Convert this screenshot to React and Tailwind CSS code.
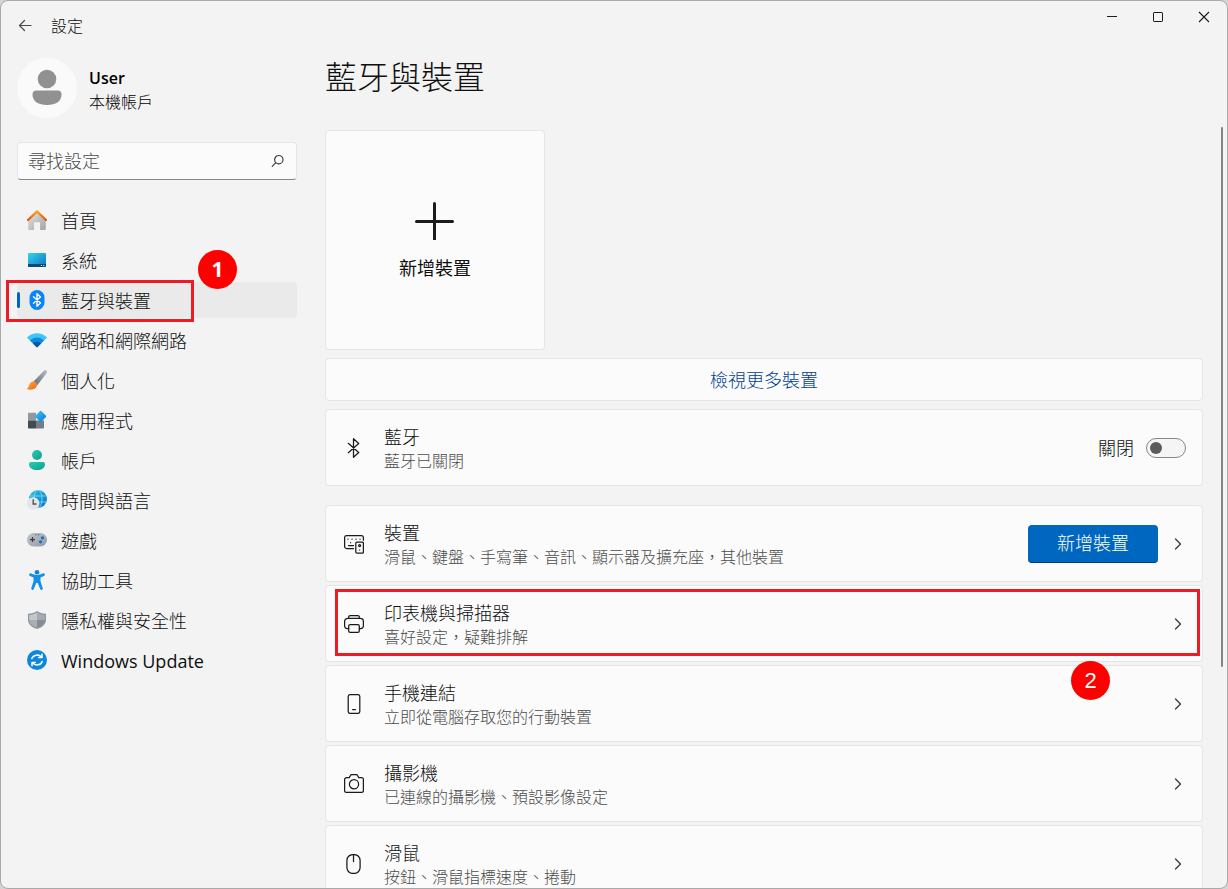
import { useState } from "react";

function HomeIcon() {
  return (
    <svg viewBox="0 0 20 20" className="size-5" aria-hidden="true">
      <defs>
        <linearGradient id="home-wall" x1="0" y1="0" x2="1" y2="1">
          <stop offset="0" stopColor="#e3e3e3" />
          <stop offset="1" stopColor="#a3a3a5" />
        </linearGradient>
        <linearGradient id="home-roof" x1="0" y1="0" x2="0" y2="1">
          <stop offset="0" stopColor="#f8a51b" />
          <stop offset="1" stopColor="#dc5512" />
        </linearGradient>
      </defs>
      <path d="M10 2.200 1.200 10.500V19a1 1 0 0 0 1 1H7v-7a.8.8 0 0 1 .8-.8h4.400a.8.8 0 0 1 .8.8v7h4.800a1 1 0 0 0 1-1v-8.500z" fill="url(#home-wall)" />
      <path d="M1 10 10 1.400l9 8.600" fill="none" stroke="url(#home-roof)" strokeWidth="2.300" strokeLinecap="round" strokeLinejoin="round" />
    </svg>
  );
}

function SystemIcon() {
  return (
    <svg viewBox="0 0 20 20" className="size-5" aria-hidden="true">
      <defs>
        <linearGradient id="system-screen" x1="0" y1="0" x2="1" y2="1">
          <stop offset="0" stopColor="#37d6ea" />
          <stop offset="1" stopColor="#0c70c4" />
        </linearGradient>
      </defs>
      <rect x="1" y="3" width="18" height="14" rx="1" fill="url(#system-screen)" />
      <path d="M1 14h18v2a1 1 0 0 1-1 1H2a1 1 0 0 1-1-1z" fill="#0b4a77" />
      <path d="M14 15.500h1M16.300 15.500h1" stroke="#fff" strokeWidth="1" />
    </svg>
  );
}

function BluetoothBadgeIcon() {
  return (
    <svg viewBox="0 0 20 20" className="size-5" aria-hidden="true">
      <rect x="2.500" y="0" width="15" height="20" rx="7.500" fill="#0a84f8" />
      <path d="m6.500 6.800 7 6.200-3.500 3.200V3.800L13.500 7l-7 6.200" fill="none" stroke="#fff" strokeWidth="1.400" strokeLinejoin="round" strokeLinecap="round" />
    </svg>
  );
}

function WifiIcon() {
  return (
    <svg viewBox="0 0 20 20" className="size-5" aria-hidden="true">
      <path d="M.3 7.200C5.600 1.900 14.400 1.900 19.700 7.200a.6.6 0 0 1 0 .8l-9.200 8.900a.7.7 0 0 1-1 0L.3 8a.6.6 0 0 1 0-.8z" fill="#3cc8f5" />
      <path d="M3 10.500c3.900-3.900 10.100-3.900 14 0l-6.500 6.400a.7.7 0 0 1-1 0z" fill="#1089e0" />
      <path d="M6 13.500c2.200-2.200 5.800-2.200 8 0l-3.500 3.400a.7.7 0 0 1-1 0z" fill="#0a53a4" />
    </svg>
  );
}

function BrushIcon() {
  return (
    <svg viewBox="0 0 20 20" className="size-5" aria-hidden="true">
      <defs>
        <linearGradient id="brush-handle" x1="1" y1="0" x2="0" y2="1">
          <stop offset="0" stopColor="#b4bac0" />
          <stop offset="1" stopColor="#656c75" />
        </linearGradient>
        <linearGradient id="brush-tip" x1="0" y1="0" x2="1" y2="1">
          <stop offset="0" stopColor="#ffae33" />
          <stop offset="1" stopColor="#f0641a" />
        </linearGradient>
      </defs>
      <path d="M19.400.6c.8.8.7 1.800.1 2.700l-9.200 12L6.500 11.600 16.900.8c.8-.7 1.800-.8 2.500-.2z" fill="url(#brush-handle)" />
      <path d="M3.100 13.200c1.500-2 4.300-2.200 5.800-.6 1.500 1.500 1.400 4-.4 5.500-2.100 1.700-5.800 2-8.200 1.100-.4-.2-.4-.7 0-.9 1.700-.9 1.600-3.500 2.800-5.100z" fill="url(#brush-tip)" />
    </svg>
  );
}

function AppsIcon() {
  return (
    <svg viewBox="0 0 20 20" className="size-5" aria-hidden="true">
      <defs>
        <linearGradient id="apps-diamond" x1="0" y1="0" x2="1" y2="1">
          <stop offset="0" stopColor="#3acbf8" />
          <stop offset="1" stopColor="#0b74d4" />
        </linearGradient>
      </defs>
      <path d="M1 3.500a.8.8 0 0 1 .8-.8H9V10.500H1z" fill="#9299a3" />
      <path d="M1 10.500h8V18.500H1.800a.8.8 0 0 1-.8-.8z" fill="#434a52" />
      <path d="M9 10.500h8v7.200a.8.8 0 0 1-.8.8H9z" fill="#757d88" />
      <path d="M13.100.9a.8.8 0 0 1 1.100 0l4.800 4.900a.8.8 0 0 1 0 1.100L14.200 11.800a.8.8 0 0 1-1.100 0L8.300 6.900a.8.8 0 0 1 0-1.100z" fill="url(#apps-diamond)" />
    </svg>
  );
}

function AccountIcon() {
  return (
    <svg viewBox="0 0 20 20" className="size-5" aria-hidden="true">
      <defs>
        <linearGradient id="account-body" x1="0" y1="0" x2="1" y2="1">
          <stop offset="0" stopColor="#27cdb4" />
          <stop offset="1" stopColor="#119c8c" />
        </linearGradient>
      </defs>
      <circle cx="10" cy="5" r="5" fill="url(#account-body)" />
      <path d="M4 12h12a2 2 0 0 1 2 2c0 4-3.500 6-8 6s-8-2-8-6a2 2 0 0 1 2-2z" fill="url(#account-body)" />
    </svg>
  );
}

function TimeIcon() {
  return (
    <svg viewBox="0 0 20 20" className="size-5" aria-hidden="true">
      <defs>
        <linearGradient id="time-globe" x1="0" y1="0" x2="1" y2="1">
          <stop offset="0" stopColor="#2cc4e0" />
          <stop offset="1" stopColor="#0a6ec8" />
        </linearGradient>
      </defs>
      <circle cx="11" cy="9" r="9" fill="url(#time-globe)" />
      <g fill="none" stroke="#7fe2f2" strokeWidth=".8">
        <ellipse cx="11" cy="9" rx="4" ry="9" />
        <path d="M3 6h16M3 12h16" />
      </g>
      <circle cx="6.200" cy="13.500" r="6.200" fill="#e3e5e8" />
      <path d="M6.200 9.300v4.700h3.300" fill="none" stroke="#4d545c" strokeWidth="1.400" />
    </svg>
  );
}

function GamingIcon() {
  return (
    <svg viewBox="0 0 20 20" className="size-5" aria-hidden="true">
      <defs>
        <linearGradient id="pad-body" x1="0" y1="0" x2="1" y2="1">
          <stop offset="0" stopColor="#c0c6cc" />
          <stop offset="1" stopColor="#929aa3" />
        </linearGradient>
      </defs>
      <rect x="0" y="3" width="20" height="13.500" rx="6.500" fill="url(#pad-body)" />
      <path d="M3 9.600h5M5.500 7.100v5" stroke="#393f46" strokeWidth="1.300" />
      <path d="M8.300 4.800h1.200M11 4.800h1.200" stroke="#4d545c" strokeWidth="1" />
      <circle cx="15.500" cy="7.800" r="1.600" fill="#0f6fc9" />
      <circle cx="13.500" cy="11.800" r="1.600" fill="#0f6fc9" />
    </svg>
  );
}

function AccessibilityIcon() {
  return (
    <svg viewBox="0 0 20 20" className="size-5" aria-hidden="true">
      <circle cx="10" cy="2.300" r="2.300" fill="#0e84dd" />
      <path d="M2.300 4.100c.4-.8 1.100-.9 1.900-.5 3.600 1.900 8 1.900 11.600 0 .8-.4 1.500-.3 1.900.5.300.8 0 1.400-.7 1.800L13.500 7.500v3.800l2.200 6.800c.2.800-.1 1.500-.8 1.800-.8.200-1.400-.1-1.700-.8L10.700 13h-1.400l-2.500 6.100c-.3.700-.9 1-1.700.8-.7-.3-1-1-.8-1.800l2.200-6.800V7.500L3 5.900c-.7-.4-1-1-.7-1.800z" fill="#1391e6" />
    </svg>
  );
}

function ShieldIcon() {
  return (
    <svg viewBox="0 0 20 20" className="size-5" aria-hidden="true">
      <path d="M10 1c2.600 1.900 5.500 2.700 9 2.800v5.700c0 4.500-3.300 7.700-9 9.500-5.700-1.800-9-5-9-9.500V3.800C4.500 3.700 7.400 2.900 10 1z" fill="#8f969d" />
      <path d="M10 2.600c2.300 1.500 4.800 2.200 7.700 2.400V10H10z" fill="#a4abb2" />
      <path d="M10 2.600C7.700 4.100 5.200 4.800 2.300 5v5H10z" fill="#c3c8cd" />
      <path d="M2.300 10c.3 3.600 2.900 6.100 7.700 7.600V10z" fill="#a9afb6" />
      <path d="M17.700 10c-.3 3.600-2.900 6.100-7.700 7.600V10z" fill="#858c94" />
    </svg>
  );
}

function UpdateIcon() {
  return (
    <svg viewBox="0 0 20 20" className="size-5" aria-hidden="true">
      <circle cx="10" cy="10" r="10" fill="#0d86dc" />
      <g fill="none" stroke="#fff" strokeWidth="1.500" strokeLinecap="round" strokeLinejoin="round">
        <path d="M4.800 8.600C6.200 4.800 11.500 3.700 14.600 7.200" />
        <path d="M15 4.300v3.200h-3.300" />
        <path d="M15.200 11.400c-1.400 3.800-6.700 4.900-9.800 1.400" />
        <path d="M5 15.700v-3.200h3.300" />
      </g>
    </svg>
  );
}

function LineIcon({ children }) {
  return (
    <svg viewBox="0 0 20 20" className="size-5 shrink-0" fill="none" stroke="#1b1b1b" strokeWidth="1.250" strokeLinecap="round" strokeLinejoin="round" aria-hidden="true">
      {children}
    </svg>
  );
}

const bluetoothIcon = (
  <LineIcon>
    <path d="m4.300 5.300 10.400 9.200L9.500 19.300V.7l5.200 4.800-10.400 9.200" />
  </LineIcon>
);

const devicesIcon = (
  <LineIcon>
    <path d="M9.500 14.500H2.700A2.100 2.100 0 0 1 .6 12.400V3.700a2.100 2.100 0 0 1 2.100-2.100h14.600a2.100 2.100 0 0 1 2.100 2.100v2.500" />
    <path d="M4 5.200h.1M8 5.200h.1M12 5.200h.1M16 5.200h.1M6.500 8.700h.1M4.500 11.500h5" />
    <rect x="11.800" y="8" width="7.600" height="11.200" rx="1.200" />
    <circle cx="15.600" cy="11.500" r="1" />
    <path d="M15.600 16h.1" />
  </LineIcon>
);

const printerIcon = (
  <LineIcon>
    <path d="M4.700 14.500H3.200A2.600 2.600 0 0 1 .6 11.900V7.500a3.200 3.200 0 0 1 3.200-3.200h12.400a3.200 3.200 0 0 1 3.200 3.200v4.400a2.600 2.600 0 0 1-2.600 2.600h-1.500" />
    <path d="M4.700 4.300V3a1.400 1.400 0 0 1 1.400-1.400h7.800A1.400 1.400 0 0 1 15.300 3v1.300" />
    <rect x="4.700" y="10.500" width="10.600" height="7.900" rx="1.400" />
  </LineIcon>
);

const phoneIcon = (
  <LineIcon>
    <rect x="4.200" y=".6" width="11.600" height="18.800" rx="2" />
    <path d="M8.600 15.500h2.800" />
  </LineIcon>
);

const cameraIcon = (
  <LineIcon>
    <path d="M.6 5.600a2 2 0 0 1 2-2h2.700l1.100-2.100a1.400 1.400 0 0 1 1.200-.8h4.800a1.400 1.400 0 0 1 1.200.8l1.100 2.100h2.700a2 2 0 0 1 2 2v11.200a1.600 1.600 0 0 1-1.600 1.600H2.200A1.600 1.600 0 0 1 .6 16.800z" />
    <circle cx="10" cy="10.200" r="4.600" />
  </LineIcon>
);

const mouseIcon = (
  <LineIcon>
    <rect x="2.900" y=".6" width="13.200" height="18.800" rx="5.800" />
    <path d="M9.500.8v6.700" />
  </LineIcon>
);

function Chevron() {
  return (
    <svg viewBox="0 0 16 16" className="size-4 shrink-0" fill="none" stroke="#3a3a3a" strokeWidth="1.300" strokeLinecap="round" strokeLinejoin="round" aria-hidden="true">
      <path d="m5.500 3 5 5-5 5" />
    </svg>
  );
}

function StepBadge({ children, className }) {
  return (
    <span className={`absolute flex size-[39px] items-center justify-center rounded-full bg-[#ff0000] text-white ${className}`}>
      {children}
    </span>
  );
}

const navItems = [
  { label: "首頁", Icon: HomeIcon },
  { label: "系統", Icon: SystemIcon },
  { label: "藍牙與裝置", Icon: BluetoothBadgeIcon, current: true },
  { label: "網路和網際網路", Icon: WifiIcon },
  { label: "個人化", Icon: BrushIcon },
  { label: "應用程式", Icon: AppsIcon },
  { label: "帳戶", Icon: AccountIcon },
  { label: "時間與語言", Icon: TimeIcon },
  { label: "遊戲", Icon: GamingIcon },
  { label: "協助工具", Icon: AccessibilityIcon },
  { label: "隱私權與安全性", Icon: ShieldIcon },
  { label: "Windows Update", Icon: UpdateIcon, latin: true },
];

function NavItem({ label, Icon, current, latin }) {
  return (
    <li className="relative">
      <a
        href="#"
        aria-current={current ? "page" : undefined}
        className={`flex h-9 items-center gap-[14px] rounded pl-[10px] text-lg leading-6 ${current ? "bg-[#eaeaea]" : ""}`}
      >
        <Icon />
        <span className={`pt-[2px] ${latin ? "font-normal" : ""}`}>{label}</span>
      </a>
      {current && (
        <>
          <span className="absolute top-[10px] left-0 h-4 w-[3px] rounded-full bg-[#0067c0]" />
          <span className="absolute -top-[2px] -left-[11px] h-[42px] w-[188px] border-3 border-[#ed1c24]" />
          <StepBadge className="-top-8 left-[181px] font-['Open_Sans',sans-serif] text-[21px] font-bold">1</StepBadge>
        </>
      )}
    </li>
  );
}

function RowText({ title, detail }) {
  return (
    <span className="min-w-0 flex-1 pt-[2px]">
      <span className="block text-lg leading-6">{title}</span>
      <span className="block text-base leading-6 text-[#4c4c4c]">{detail}</span>
    </span>
  );
}

const cardClass = "flex h-[77px] shrink-0 items-center rounded border border-[#e5e5e5] bg-[#fbfbfb] pr-4 pl-[18px]";

function LinkRow({ icon, title, detail }) {
  return (
    <a href="#" className={`${cardClass} gap-5`}>
      {icon}
      <RowText title={title} detail={detail} />
      <Chevron />
    </a>
  );
}

export default function App() {
  const [bluetooth, setBluetooth] = useState(false);

  return (
    <div className="h-screen bg-[#d4d4d4] font-['Open_Sans','Noto_Sans_CJK_TC',sans-serif] font-light text-[#0f0f0f]" lang="zh-Hant">
      <div className="flex h-full flex-col overflow-hidden rounded-lg border border-[#a9a9a9] bg-[#f3f3f3]">
        <header className="flex h-[50px] shrink-0 items-center pl-4">
          <button type="button" aria-label="返回" className="flex size-4 items-center justify-center">
            <svg viewBox="0 0 16 16" className="size-4" fill="none" stroke="#4a4a4a" strokeWidth="1.200" strokeLinecap="round" strokeLinejoin="round">
              <path d="M14 7.500H2.500M7.500 2.500l-5 5 5 5" />
            </svg>
          </button>
          <span className="ml-[18px] flex-1 text-base leading-6">設定</span>
          <div className="flex self-start">
            <button type="button" aria-label="最小化" className="flex h-8 w-[46px] items-center justify-center">
              <svg viewBox="0 0 12 12" className="size-3" stroke="#1b1b1b">
                <path d="M1 5.500h10" />
              </svg>
            </button>
            <button type="button" aria-label="最大化" className="flex h-8 w-[46px] items-center justify-center">
              <svg viewBox="0 0 12 12" className="size-3" fill="none" stroke="#1b1b1b">
                <rect x="1.500" y="1.500" width="9" height="9" rx=".6" />
              </svg>
            </button>
            <button type="button" aria-label="關閉視窗" className="flex h-8 w-[46px] items-center justify-center">
              <svg viewBox="0 0 12 12" className="size-3" stroke="#1b1b1b" strokeWidth="1.100">
                <path d="m1 1 10 10M11 1 1 11" />
              </svg>
            </button>
          </div>
        </header>

        <div className="flex min-h-0 flex-1">
          <aside className="w-[296px] shrink-0 pt-[7px] pl-4">
            <div className="flex items-center gap-3">
              <svg viewBox="0 0 60 60" className="size-[60px]" aria-hidden="true">
                <circle cx="30" cy="30" r="30" fill="#fafafa" />
                <circle cx="30" cy="21" r="9.300" fill="#919191" />
                <path d="M19.500 32.500h21a4 4 0 0 1 4 4c0 7-6 10.500-14.500 10.500s-14.500-3.500-14.500-10.500a4 4 0 0 1 4-4z" fill="#919191" />
              </svg>
              <div className="pt-1 text-black">
                <div className="text-base leading-6 font-semibold">User</div>
                <div className="text-base leading-6">本機帳戶</div>
              </div>
            </div>

            <div className="mt-6 flex h-[38px] items-center rounded border border-[#e5e5e5] border-b-[#868686] bg-[#fbfbfb] px-[10px]">
              <label htmlFor="settings-search" className="sr-only">尋找設定</label>
              <input
                id="settings-search"
                type="text"
                placeholder="尋找設定"
                className="h-full min-w-0 flex-1 bg-transparent text-lg outline-none placeholder:text-[#4c4c4c]"
              />
              <svg viewBox="0 0 16 16" className="size-4" fill="none" stroke="#3f3f3f" strokeWidth="1.200" strokeLinecap="round" aria-hidden="true">
                <circle cx="8.800" cy="6.700" r="4.200" />
                <path d="M5.800 9.700 2.200 13.300" />
              </svg>
            </div>

            <nav className="mt-[22px]">
              <ul className="flex flex-col gap-1">
                {navItems.map((item) => (
                  <NavItem key={item.label} {...item} />
                ))}
              </ul>
            </nav>
          </aside>

          <main className="flex min-w-0 flex-1 flex-col pl-7">
            <h1 className="flex h-[52px] shrink-0 items-center text-[32px] leading-10">藍牙與裝置</h1>

            <div className="mt-6 flex min-h-0 flex-1">
              <div className="flex min-w-0 flex-1 flex-col overflow-hidden pt-[3px]">
                <button type="button" className="flex size-[220px] shrink-0 flex-col items-center justify-center gap-4 rounded border border-[#e5e5e5] bg-[#fbfbfb]">
                  <svg viewBox="0 0 40 40" className="size-10" stroke="#1b1b1b" strokeWidth="3" strokeLinecap="round" aria-hidden="true">
                    <path d="M19.500 3.500v36M1.500 21.500h36" />
                  </svg>
                  <span className="text-lg leading-6 font-normal">新增裝置</span>
                </button>

                <a href="#" className="mt-2 flex h-[43px] shrink-0 items-center justify-center rounded border border-[#e5e5e5] bg-[#fbfbfb] text-lg leading-6 text-[#003e92]">
                  檢視更多裝置
                </a>

                <div className={`${cardClass} mt-2 gap-5`}>
                  {bluetoothIcon}
                  <RowText title="藍牙" detail="藍牙已關閉" />
                  <label className="flex items-center gap-3 text-lg leading-6">
                    {bluetooth ? "開啟" : "關閉"}
                    <input
                      type="checkbox"
                      role="switch"
                      aria-label="藍牙"
                      checked={bluetooth}
                      onChange={(event) => setBluetooth(event.target.checked)}
                      className="flex h-5 w-10 appearance-none items-center rounded-full border border-[#868686] bg-[#f5f5f5] px-[3px] before:block before:size-3 before:rounded-full before:bg-[#5c5c5c] checked:justify-end checked:border-[#0067c0] checked:bg-[#0067c0] checked:before:bg-white"
                    />
                  </label>
                </div>

                <div className="mt-[19px] flex flex-col gap-[3px]">
                  <div className={`${cardClass} gap-5`}>
                    {devicesIcon}
                    <RowText title="裝置" detail="滑鼠、鍵盤、手寫筆、音訊、顯示器及擴充座，其他裝置" />
                    <div className="flex items-center gap-3">
                      <button type="button" className="h-[38px] w-[130px] rounded border-b border-[#003e73] bg-[#0067c0] text-lg leading-6 text-white">
                        新增裝置
                      </button>
                      <a href="#" aria-label="裝置">
                        <Chevron />
                      </a>
                    </div>
                  </div>

                  <div className="relative">
                    <LinkRow icon={printerIcon} title="印表機與掃描器" detail="喜好設定，疑難排解" />
                    <span className="pointer-events-none absolute top-1 right-[3px] bottom-[6px] left-[10px] border-3 border-[#ed1c24]" />
                    <StepBadge className="right-[93px] -bottom-[38px] z-10 font-['Liberation_Sans',sans-serif] text-[22px] font-normal">2</StepBadge>
                  </div>

                  <LinkRow icon={phoneIcon} title="手機連結" detail="立即從電腦存取您的行動裝置" />
                  <LinkRow icon={cameraIcon} title="攝影機" detail="已連線的攝影機、預設影像設定" />
                  <LinkRow icon={mouseIcon} title="滑鼠" detail="按鈕、滑鼠指標速度、捲動" />
                </div>
              </div>

              <div className="flex w-6 shrink-0 justify-end pr-1" aria-hidden="true">
                <div className="h-[71%] w-[2px] rounded-full bg-[#868686]" />
              </div>
            </div>
          </main>
        </div>
      </div>
    </div>
  );
}
